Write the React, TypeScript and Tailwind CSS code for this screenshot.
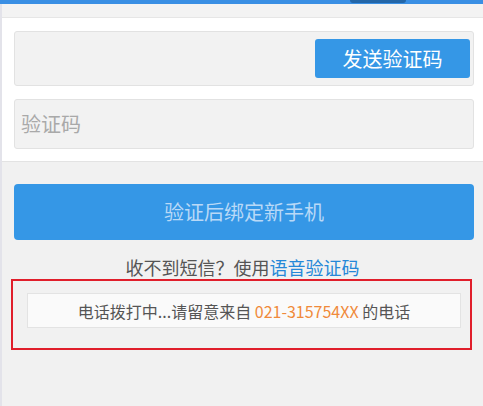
import React from "react";

export default function App() {
  const font = { fontFamily: '"Noto Sans CJK SC", "Noto Sans", sans-serif' };
  return (
    <div className="w-[483px] h-[406px] bg-[#f1f1f1] overflow-hidden flex flex-col" style={font}>
      <div className="relative h-[4px] bg-[#3a8fe4] shrink-0">
        <div className="absolute left-[350px] top-0 w-[56px] h-[3px] rounded-b-full bg-[#2366a8]" />
      </div>
      <div className="flex-1 flex flex-col border-l-2 border-[#e3e3ea]">
        <div className="h-[14px] bg-[#f3f3f3] border-b border-[#e6e6e6] shrink-0" />
        <div className="bg-white pl-[12px] pr-[9px] pt-[13px] pb-[12px] border-b border-[#e3e3e3] flex flex-col gap-[13px]">
          <div className="h-[55px] bg-[#f2f2f2] border border-[#e2e2e2] rounded-[3px] flex items-center justify-end pr-[3px]">
            <div className="w-[155px] h-[39px] bg-[#3597e6] rounded-[3px] flex items-center justify-center text-white text-[20px] leading-none">
              发送验证码
            </div>
          </div>
          <div className="h-[50px] bg-[#f2f2f2] border border-[#e2e2e2] rounded-[3px] flex items-center pl-[6px] text-[20px] text-[#a9a9a9] leading-none">
            验证码
          </div>
        </div>
        <div className="ml-[12px] mr-[9px] mt-[22px] h-[56px] bg-[#3597e6] rounded-[4px] flex items-center justify-center text-[20px] text-[#b9d9f7] leading-none">
          验证后绑定新手机
        </div>
        <div className="mt-[15px] h-[24px] flex items-center justify-center text-[18px] text-[#555555] leading-none">
          收不到短信？使用<span className="text-[#2588d8]">语音验证码</span>
        </div>
        <div className="ml-[9px] w-[461px] border-2 border-[#e01e2b] pt-[12px] pb-[20px] pl-[14px] pr-[9px]">
          <div className="h-[35px] bg-[#fafafa] border border-[#e3e3e3] flex items-center justify-center text-[16px] text-[#555555] leading-none">
            电话拨打中...请留意来自&nbsp;<span className="text-[#f08a3a]">021-315754XX</span>&nbsp;的电话
          </div>
        </div>
      </div>
    </div>
  );
}
